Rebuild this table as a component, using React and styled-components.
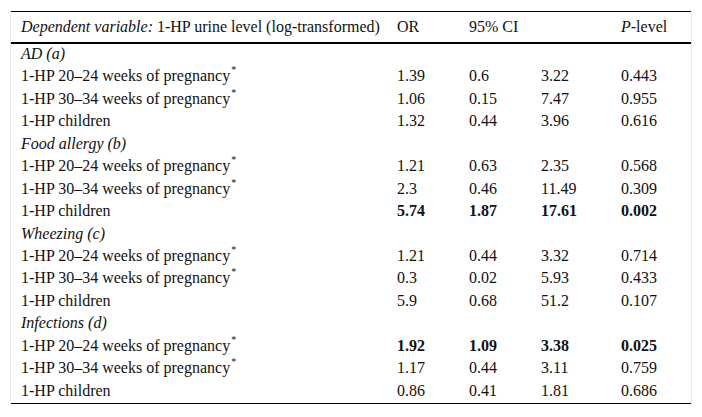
import styled, { createGlobalStyle } from "styled-components";

const GlobalStyle = createGlobalStyle`
  body {
    margin: 0;
    background: #fff;
  }
`;

const sections = [
  {
    title: "AD (a)",
    rows: [
      { name: "1-HP 20–24 weeks of pregnancy", star: true, values: ["1.39", "0.6", "3.22", "0.443"] },
      { name: "1-HP 30–34 weeks of pregnancy", star: true, values: ["1.06", "0.15", "7.47", "0.955"] },
      { name: "1-HP children", values: ["1.32", "0.44", "3.96", "0.616"] },
    ],
  },
  {
    title: "Food allergy (b)",
    rows: [
      { name: "1-HP 20–24 weeks of pregnancy", star: true, values: ["1.21", "0.63", "2.35", "0.568"] },
      { name: "1-HP 30–34 weeks of pregnancy", star: true, values: ["2.3", "0.46", "11.49", "0.309"] },
      { name: "1-HP children", bold: true, values: ["5.74", "1.87", "17.61", "0.002"] },
    ],
  },
  {
    title: "Wheezing (c)",
    rows: [
      { name: "1-HP 20–24 weeks of pregnancy", star: true, values: ["1.21", "0.44", "3.32", "0.714"] },
      { name: "1-HP 30–34 weeks of pregnancy", star: true, values: ["0.3", "0.02", "5.93", "0.433"] },
      { name: "1-HP children", values: ["5.9", "0.68", "51.2", "0.107"] },
    ],
  },
  {
    title: "Infections (d)",
    rows: [
      { name: "1-HP 20–24 weeks of pregnancy", star: true, bold: true, values: ["1.92", "1.09", "3.38", "0.025"] },
      { name: "1-HP 30–34 weeks of pregnancy", star: true, values: ["1.17", "0.44", "3.11", "0.759"] },
      { name: "1-HP children", values: ["0.86", "0.41", "1.81", "0.686"] },
    ],
  },
];

const App = () => {
  return (
    <>
      <GlobalStyle />
      <Frame>
        <Table>
          {/* header */}
          <HeaderRow>
            <Cell>
              <Em>Dependent variable:</Em> 1-HP urine level (log-transformed)
            </Cell>
            <Cell>OR</Cell>
            <Cell $span={2}>95% CI</Cell>
            <Cell>
              <Em>P</Em>-level
            </Cell>
          </HeaderRow>

          {sections.map((section) => (
            <div key={section.title}>
              <Row>
                <Cell>
                  <Em>{section.title}</Em>
                </Cell>
              </Row>
              {section.rows.map((row, idx) => (
                <Row key={idx}>
                  <Cell>
                    {row.name}
                    {row.star && <Star>*</Star>}
                  </Cell>
                  {row.values.map((v, i) => (
                    <Cell key={i} $bold={row.bold}>
                      {v}
                    </Cell>
                  ))}
                </Row>
              ))}
            </div>
          ))}
        </Table>
      </Frame>
    </>
  );
};

const Frame = styled.div`
  margin: 10px 0 0 10px;
  width: 680px;
  padding-top: 1px;
  border-left: 1px solid #e9e9e9;
  border-right: 1px solid #e9e9e9;
  padding-bottom: 2px;
`;

const Table = styled.div`
  border-top: 1px solid #000;
  border-bottom: 1px solid #000;
  font-family: "Liberation Serif", "Times New Roman", serif;
  font-size: 16px;
  color: #111;
`;

const Row = styled.div`
  display: grid;
  grid-template-columns: 376px 72px 72px 80px 1fr;
  box-sizing: border-box;
  height: 22.45px;
  line-height: 20.2px;
  padding: 0 0 2.25px 10px;
  white-space: nowrap;
`;

const HeaderRow = styled(Row)`
  height: 32px;
  line-height: 29px;
  padding-bottom: 1px;
  border-bottom: 2px solid #000;
`;

const Cell = styled.div`
  font-weight: ${(p) => (p.$bold ? 700 : 400)};
  grid-column: span ${(p) => p.$span || 1};
`;

const Em = styled.i`
  font-style: italic;
`;

const Star = styled.span`
  position: relative;
  top: -8px;
  font-size: 10px;
  line-height: 0;
  margin-left: 1px;
`;

export default App;
